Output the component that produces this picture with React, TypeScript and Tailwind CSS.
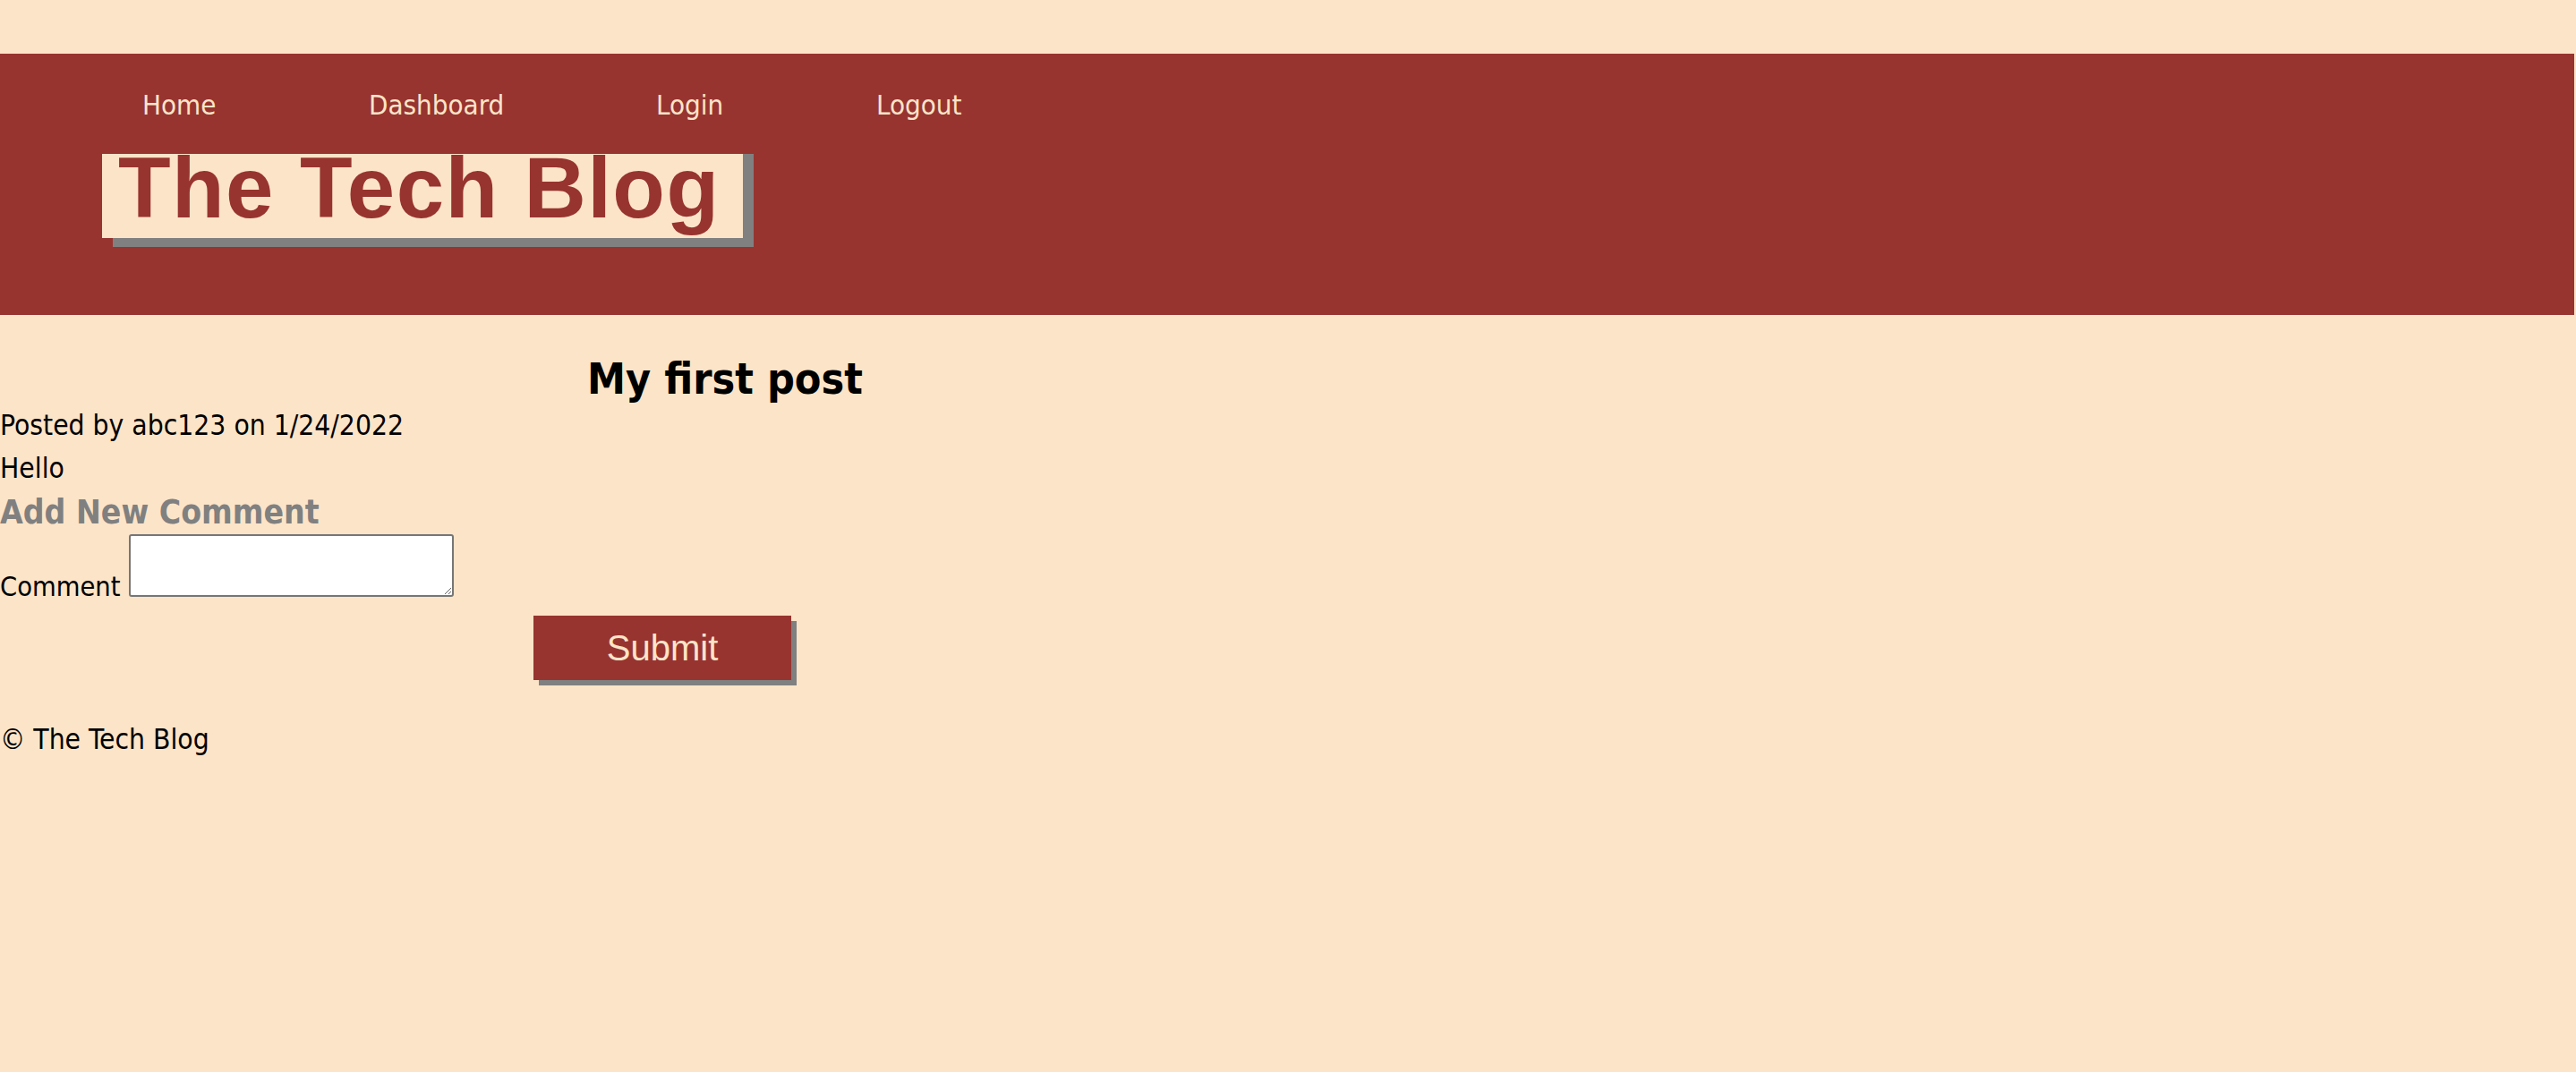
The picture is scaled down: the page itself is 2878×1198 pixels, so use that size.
import React from "react";

const body = "'DejaVu Sans Condensed', 'DejaVu Sans', 'Liberation Sans', sans-serif";

export default function App() {
  return (
    <div
      className="min-h-screen bg-[#fce4c8] pt-[60px] text-black"
      style={{ fontFamily: body }}
    >
      <header className="mr-[2px] h-[292px] bg-[#973430]">
        <nav className="grid grid-cols-[253px_321px_246px_auto] pl-[159px] pt-[37px] text-[31px] leading-[40px] text-[#fce4c8]">
          <a href="#">Home</a>
          <a href="#">Dashboard</a>
          <a href="#">Login</a>
          <a href="#">Logout</a>
        </nav>
        <div className="ml-[114px] mt-[35px] flex">
          <h1
            className="h-[94px] bg-[#fce4c8] pl-[18px] pr-[26px] pb-[18px] text-[96px] font-bold leading-[76px] tracking-[1.4px] text-[#973430] shadow-[12px_0_0_#808080,12px_10px_0_#808080]"
            style={{ fontFamily: "'Liberation Sans', Arial, sans-serif" }}
          >
            The Tech Blog
          </h1>
        </div>
      </header>

      <main>
        <h2 className="mt-[43px] w-[1620px] text-center text-[48px] font-bold leading-[56px]">
          My first post
        </h2>
        <p className="text-[31.5px] leading-[48px]">Posted by abc123 on 1/24/2022</p>
        <p className="text-[31.5px] leading-[48px]">Hello</p>
        <form>
          <h3 className="mt-[2px] text-[37px] font-bold leading-[48px] text-[#808080]">Add New Comment</h3>
          <div className="flex items-end">
            <label className="mb-[-13px] mr-[10px] text-[30.5px] leading-[48px]">Comment</label>
            <textarea className="h-[70px] w-[363px] resize-y rounded-[3px] border-2 border-[#767676] bg-white" />
          </div>
          <button
            type="button"
            className="ml-[596px] mt-[21px] block h-[72px] w-[288px] bg-[#973430] text-[40px] text-[#fce4c8] shadow-[6px_6px_0_#808080]"
            style={{ fontFamily: "'Liberation Sans', Arial, sans-serif" }}
          >
            Submit
          </button>
        </form>
      </main>

      <footer className="mt-[42px] text-[31.5px] leading-[48px]">© The Tech Blog</footer>
    </div>
  );
}
